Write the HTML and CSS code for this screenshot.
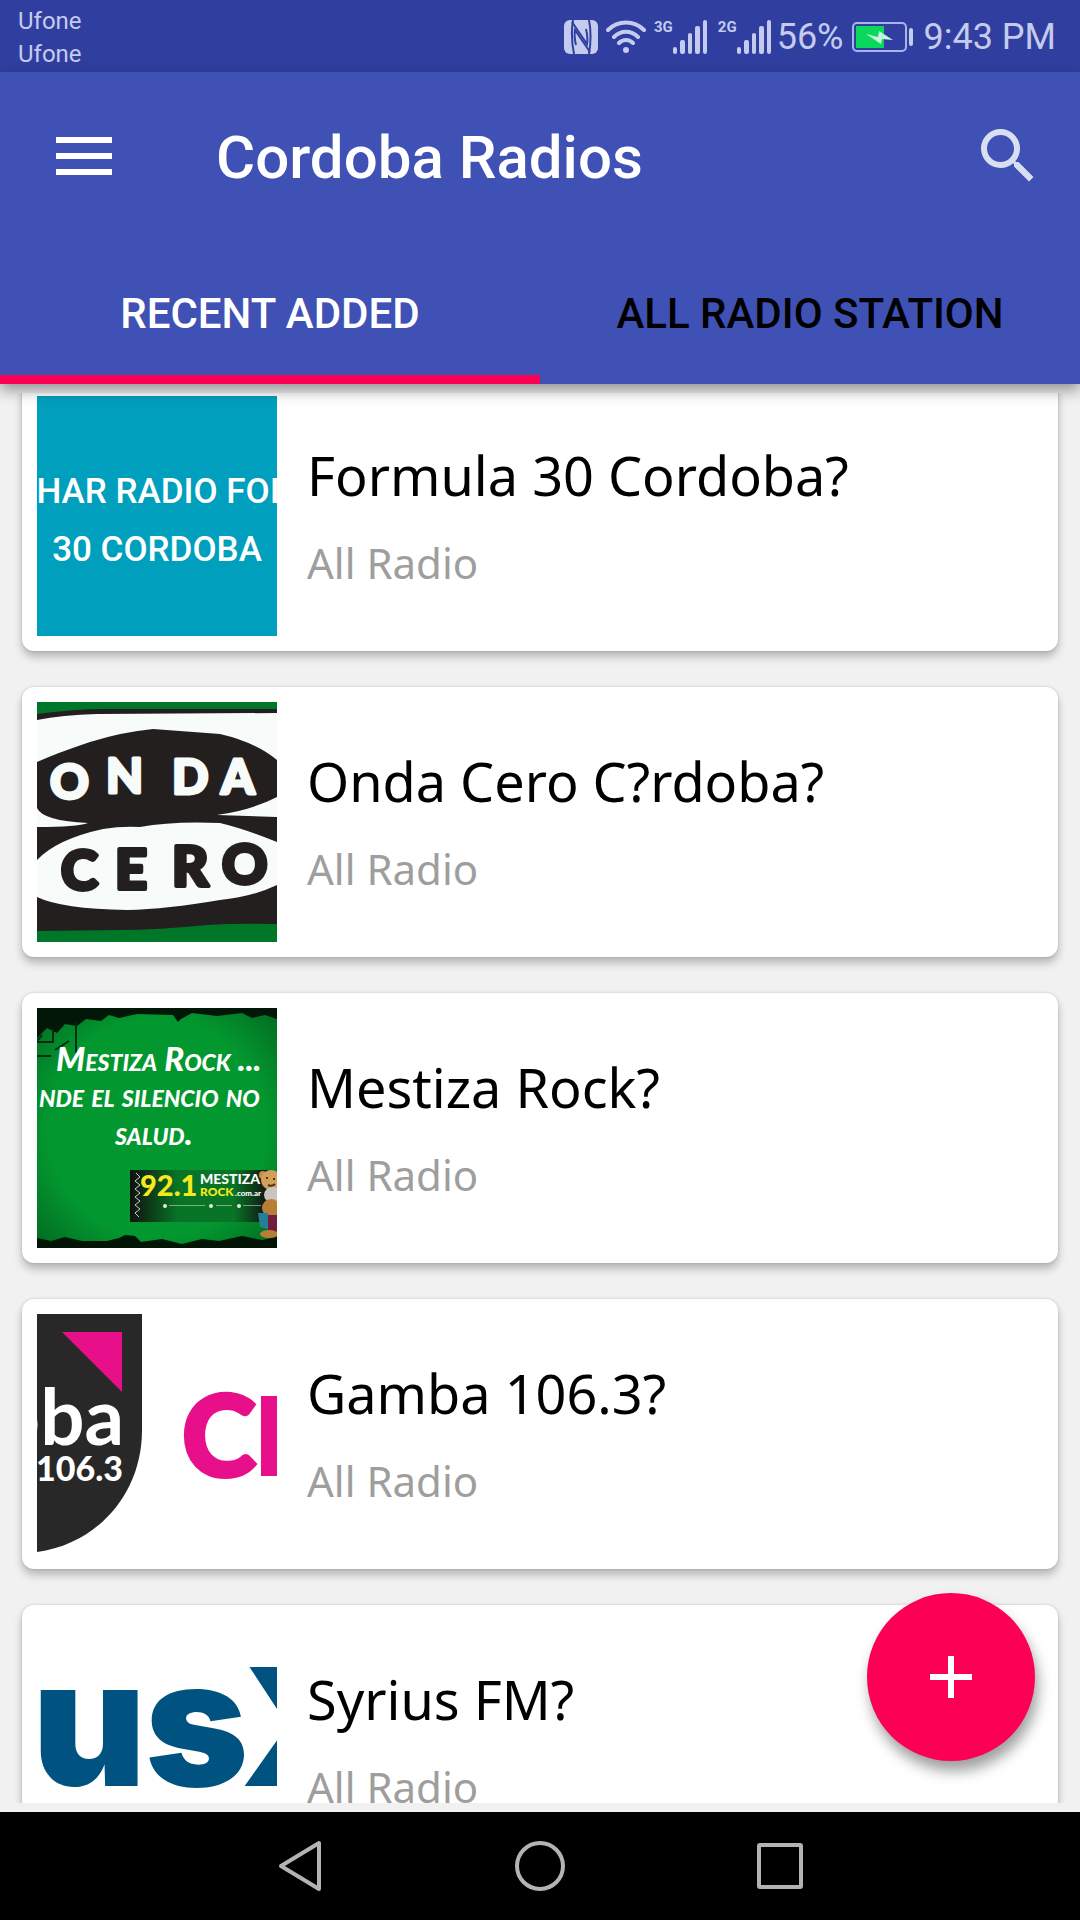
FILE: index.html
```
<!DOCTYPE html>
<html lang="en">
<head>
  <meta charset="UTF-8">
  <meta name="viewport" content="width=device-width, initial-scale=1.0">
  <title>Cordoba Radios</title>
  <link rel="stylesheet" href="styles.css">
</head>
<body>
  <div class="status-bar">
    <div class="carriers">
      <span>Ufone</span>
      <span>Ufone</span>
    </div>
    <div class="status-icons">
      <svg class="nfc" width="34" height="34" viewBox="0 0 34 34">
        <rect width="34" height="34" rx="6" fill="#c5cbee"/>
        <path d="M9 0C7 12 8 24 10 34M25 0c2 10 2 22 0 34" fill="none" stroke="#303f9f" stroke-width="2"/>
        <path d="M8 2l15 22c1-6 0-11-1-15M26 32L11 10c-1 6 0 11 1 15" fill="none" stroke="#303f9f" stroke-width="2"/>
      </svg>
      <svg class="wifi" width="40" height="34" viewBox="0 0 40 34">
        <g fill="none" stroke="#c5cbee" stroke-width="4" stroke-linecap="round">
          <path d="M2 10c10-10 26-10 36 0M8 17c7-7 17-7 24 0M13 23c4-4 10-4 14 0"/>
        </g>
        <circle cx="20" cy="30" r="3" fill="#c5cbee"/>
      </svg>
      <span class="network">3G</span>
      <svg class="signal" width="34" height="34" viewBox="0 0 34 34" fill="#c5cbee">
        <rect y="27" width="4" height="7" rx="2"/>
        <rect x="7" y="20" width="5" height="14" rx="2"/>
        <rect x="15" y="13" width="4" height="21" rx="2"/>
        <rect x="22" y="6" width="5" height="28" rx="2"/>
        <rect x="30" width="4" height="34" rx="2"/>
      </svg>
      <span class="network">2G</span>
      <svg class="signal" width="34" height="34" viewBox="0 0 34 34" fill="#c5cbee">
        <rect y="27" width="4" height="7" rx="2"/>
        <rect x="7" y="20" width="5" height="14" rx="2"/>
        <rect x="15" y="13" width="4" height="21" rx="2"/>
        <rect x="22" y="6" width="5" height="28" rx="2"/>
        <rect x="30" width="4" height="34" rx="2"/>
      </svg>
      <span class="percent">56%</span>
      <svg class="battery" width="62" height="30" viewBox="0 0 62 30">
        <rect x="1" y="1" width="53" height="28" rx="4" fill="none" stroke="#a9b2ea" stroke-width="2"/>
        <rect x="4" y="4" width="28" height="22" fill="#08d85c"/>
        <path d="M14 12l12 3 1-6 14 9-11-1-1 5z" fill="#c5f5dc"/>
        <rect x="57" y="6" width="4" height="18" rx="2" fill="#c5cbee"/>
      </svg>
      <span class="clock">9:43 PM</span>
    </div>
  </div>

  <header class="app-bar">
    <div class="toolbar">
      <button class="icon-button" aria-label="Menu">
        <svg width="56" height="38" viewBox="0 0 56 38" fill="#fff">
          <path d="M0 0h56v6H0zM0 16h56v6H0zM0 32h56v6H0z"/>
        </svg>
      </button>
      <h1>Cordoba Radios</h1>
      <button class="icon-button search" aria-label="Search">
        <svg width="72" height="72" viewBox="0 0 24 24" fill="#dadef1">
          <path d="M15.5 14h-.79l-.28-.27A6.47 6.47 0 0 0 16 9.500 6.500 6.500 0 1 0 9.500 16c1.610 0 3.090-.59 4.230-1.570l.27.28v.79l5 4.990L20.490 19l-4.990-5zm-6 0C7.010 14 5 11.990 5 9.500S7.010 5 9.500 5 14 7.010 14 9.500 11.990 14 9.500 14z"/>
        </svg>
      </button>
    </div>
    <nav class="tabs">
      <button class="tab active">RECENT ADDED</button>
      <button class="tab">ALL RADIO STATION</button>
    </nav>
  </header>

  <main>
    <div class="list">
      <article class="card">
        <svg class="thumb" viewBox="0 0 240 240">
          <rect width="240" height="240" fill="#009fbd"/>
          <g class="formula-text" text-anchor="middle">
            <text x="121" y="107">HAR RADIO FOI</text>
            <text x="120" y="165">30 CORDOBA</text>
          </g>
        </svg>
        <div class="info">
          <h2>Formula 30 Cordoba?</h2>
          <p>All Radio</p>
        </div>
      </article>

      <article class="card">
        <svg class="thumb" viewBox="0 0 240 240">
          <rect width="240" height="240" fill="#007629"/>
          <path d="M0 12Q40 7 66 7L240 7V222Q200 221 170 223Q120 228 83 228L0 229z" fill="#231f1f"/>
          <path d="M0 18Q25 13 60 12L240 11V58Q218 40 183 32L116 27Q85 30 53 40Q20 51 0 60z" fill="#f7fbf9"/>
          <path d="M240 95Q215 108 180 113L240 115zM0 106Q6 119 51 121Q40 125 0 125z" fill="#f7fbf9"/>
          <path d="M0 158Q20 137 66 127Q84 124 103 125Q135 119 183 121Q208 127 240 140V183Q215 195 183 198Q130 207 90 208Q25 207 0 195z" fill="#f7fbf9"/>
          <text class="onda" x="13 69 135 184" y="97 91 92 92">ONDA</text>
          <text class="cero" x="24 78 135 185" y="188 187 184 182">CERO</text>
        </svg>
        <div class="info">
          <h2>Onda Cero C?rdoba?</h2>
          <p>All Radio</p>
        </div>
      </article>

      <article class="card">
        <svg class="thumb" viewBox="0 0 240 240">
          <defs>
            <radialGradient id="greenGlow" r="75%">
              <stop offset="60%" stop-color="#03982f"/>
              <stop offset="100%" stop-color="#026020"/>
            </radialGradient>
            <linearGradient id="banner">
              <stop offset="0" stop-color="#111"/>
              <stop offset="35%" stop-color="#087526"/>
              <stop offset="75%" stop-color="#087526"/>
              <stop offset="100%" stop-color="#111"/>
            </linearGradient>
          </defs>
          <rect width="240" height="240" fill="url(#greenGlow)"/>
          <path d="M0 0H240V11L228 7 215 10 205 5 180 8 155 5 144 11 141 14 136 7 100 6 82 10 72 7 64 13 49 11 40 18 28 16 20 25 10 20 0 30z" fill="#021707"/>
          <path d="M39 15V45M16 21V34H0M0 48H14M18 42L32 33M5 27L0 33" fill="none" stroke="#022e0d" stroke-width="2"/>
          <path d="M0 240V230L14 233 28 229 45 233 70 233 82 230 88 227 98 228 104 234 125 231 145 236 165 231 182 233 205 228 225 232 240 229V240z" fill="#011405"/>
          <g class="mestiza">
            <text x="19" y="63">Mestiza Rock ...</text>
            <text x="2" y="99">nde el silencio no</text>
            <text x="78" y="137">salud.</text>
          </g>
          <rect x="93" y="162" width="138" height="52" fill="url(#banner)"/>
          <path d="M99 165l4 4-5 4 5 4-5 4 5 4-5 4 5 4-5 4 5 4-5 4 4 4" fill="none" stroke="#ccc" stroke-width="1"/>
          <text class="freq" x="103" y="188">92.1</text>
          <text class="freq-name" x="163" y="176">MESTIZA</text>
          <text class="freq-rock" x="163" y="188">ROCK</text>
          <text class="freq-site" x="198" y="188">.com.ar</text>
          <g fill="#dfeee2">
            <circle cx="128" cy="198" r="2"/>
            <circle cx="174" cy="198" r="2"/>
            <circle cx="202" cy="198" r="2"/>
            <path d="M132 197h36v1h-36zM179 197h16v1h-16zM206 197h18v1h-18z" opacity=".5"/>
          </g>
          <circle cx="226" cy="167" r="4" fill="#c98d44"/>
          <circle cx="234" cy="172" r="10" fill="#d3a05a"/>
          <ellipse cx="236" cy="187" rx="9" ry="8" fill="#c9c4bd"/>
          <ellipse cx="234" cy="200" rx="9" ry="9" fill="#b87e38"/>
          <path d="M221 205h10v16l-8-2z" fill="#237f9a"/>
          <path d="M231 207h9v16h-9z" fill="#741c3c"/>
          <ellipse cx="232" cy="226" rx="9" ry="4" fill="#b87e38"/>
          <path d="M229 170h2M236 171h2M231 177q4 2 7-1" fill="none" stroke="#53351a" stroke-width="2"/>
        </svg>
        <div class="info">
          <h2>Mestiza Rock?</h2>
          <p>All Radio</p>
        </div>
      </article>

      <article class="card">
        <svg class="thumb" viewBox="0 0 240 240">
          <path d="M0 0H105V116C105 180 60 230 0 238z" fill="#282828"/>
          <path d="M25 18H85V78z" fill="#e80f8b"/>
          <text class="gamba" x="87" y="131" text-anchor="end">oba</text>
          <text class="gamba-freq" x="86" y="167" text-anchor="end">106.3</text>
          <text class="gamba-city" x="145" y="162">C</text>
          <rect x="224" y="82" width="16" height="80" fill="#e80f8b"/>
        </svg>
        <div class="info">
          <h2>Gamba 106.3?</h2>
          <p>All Radio</p>
        </div>
      </article>

      <article class="card">
        <svg class="thumb" viewBox="0 0 240 240">
          <text class="syrius" x="-5 108" y="166">us</text>
          <text class="syrius-x" x="204" y="166">X</text>
        </svg>
        <div class="info">
          <h2>Syrius FM?</h2>
          <p>All Radio</p>
        </div>
      </article>
    </div>

    <button class="fab" aria-label="Add station">
      <svg width="42" height="42" viewBox="0 0 42 42" fill="#fff">
        <path d="M18 0h6v18h18v6H24v18h-6V24H0v-6h18z"/>
      </svg>
    </button>
  </main>

  <footer class="nav-bar">
    <button aria-label="Back">
      <svg width="60" height="60" viewBox="0 0 60 60">
        <path d="M49 7V53L11 30z"/>
      </svg>
    </button>
    <button aria-label="Home">
      <svg width="60" height="60" viewBox="0 0 60 60">
        <circle cx="30" cy="30" r="23"/>
      </svg>
    </button>
    <button aria-label="Recent apps">
      <svg width="60" height="60" viewBox="0 0 60 60">
        <rect x="9" y="9" width="42" height="42" rx="1"/>
      </svg>
    </button>
  </footer>
</body>
</html>
```
FILE: styles.css
```
* {
  box-sizing: border-box;
}

body {
  margin: 0;
  height: 100vh;
  display: flex;
  flex-direction: column;
  overflow: hidden;
  font-family: "Noto Sans", sans-serif;
  background-color: #f1f1f1;
  color: #000;
}

h1, h2, p {
  margin: 0;
}

button {
  padding: 0;
  border: none;
  background: none;
  cursor: pointer;
}

svg {
  display: block;
  flex: none;
}

/* status bar */
.status-bar {
  display: flex;
  justify-content: space-between;
  height: 72px;
  padding: 0 24px 0 18px;
  background-color: #303f9f;
  color: #c5cbee;
  font-family: Roboto, sans-serif;
}

.carriers {
  display: flex;
  flex-direction: column;
  padding-top: 5px;
  font-size: 24px;
  line-height: 33px;
}

.status-icons {
  display: flex;
  align-items: center;
  padding-top: 1px;
  font-size: 36px;
}

.wifi {
  margin: 0 8px;
}

.network {
  align-self: flex-start;
  padding-top: 16px;
  font-size: 15px;
  font-weight: bold;
  line-height: 20px;
}

.signal + .network {
  margin-left: 11px;
}

.percent {
  margin: 0 8px 0 6px;
}

.clock {
  margin-left: 10px;
}

/* app bar */
.app-bar {
  position: relative;
  z-index: 1;
  background-color: #3f51b5;
  box-shadow: 0 6px 14px rgba(0,0,0,0.4);
  font-family: Roboto, sans-serif;
}

.toolbar {
  display: flex;
  align-items: center;
  height: 168px;
  padding: 0 36px 0 48px;
}

.toolbar h1 {
  flex: 1;
  padding: 2px 0 0 96px;
  font-size: 60px;
  font-weight: 500;
  color: #fff;
}

.icon-button {
  display: flex;
  align-items: center;
  justify-content: center;
  width: 72px;
  height: 72px;
}

.tabs {
  display: flex;
}

.tab {
  flex: 1;
  height: 144px;
  padding-top: 2px;
  border-top: 9px solid transparent;
  border-bottom: 9px solid transparent;
  font-family: inherit;
  font-size: 42px;
  font-weight: 500;
  color: #000;
}

.tab.active {
  color: #fff;
  border-bottom-color: #fb0055;
}

/* station list */
main {
  position: relative;
  flex: 1;
  min-height: 0;
  padding: 9px 0;
}

.list {
  height: 100%;
  padding: 0 22px;
  overflow: hidden;
}

.card {
  display: flex;
  align-items: center;
  gap: 30px;
  margin-bottom: 36px;
  padding: 15px;
  background-color: #fff;
  border-radius: 12px;
  box-shadow: 0 6px 9px rgba(0,0,0,0.24), 0 0 3px rgba(0,0,0,0.16);
}

/* list is scrolled a little under the tabs */
.card:first-child {
  margin-top: -12px;
}

.thumb {
  width: 240px;
  height: 240px;
  overflow: hidden;
}

.info {
  display: flex;
  flex-direction: column;
  gap: 22px;
  padding-bottom: 3px;
}

.info h2 {
  font-size: 54px;
  font-weight: normal;
  line-height: 74px;
}

.info p {
  font-size: 42px;
  line-height: 57px;
  color: #9e9e9e;
}

/* artwork lettering */
.formula-text {
  font: 500 35px Roboto, sans-serif;
  fill: #fff;
}

.onda {
  font: 900 48px Lato, sans-serif;
  fill: #f7fbf9;
  stroke: #f7fbf9;
  stroke-width: 3px;
  stroke-linejoin: round;
}

.cero {
  font: 900 56px Lato, sans-serif;
  fill: #231f1f;
  stroke: #231f1f;
  stroke-width: 4px;
  stroke-linejoin: round;
}

.mestiza {
  font: italic small-caps 900 33px Lato, sans-serif;
  fill: #fff;
}

.freq {
  font: 900 29px Lato, sans-serif;
  fill: #f7ea1c;
}

.freq-name {
  font: 900 14px Lato, sans-serif;
  fill: #fff;
}

.freq-rock {
  font: 900 12px Lato, sans-serif;
  fill: #f7ea1c;
}

.freq-site {
  font: 900 8px Lato, sans-serif;
  fill: #fff;
}

.gamba {
  font: bold 78px Lato, sans-serif;
  fill: #fff;
}

.gamba-freq {
  font: 900 34px Lato, sans-serif;
  fill: #fff;
}

.gamba-city {
  font: 900 112px Lato, sans-serif;
  fill: #e80f8b;
  stroke: #e80f8b;
  stroke-width: 4px;
}

.syrius {
  font: 900 176px Inter, sans-serif;
  fill: #005380;
}

.syrius-x {
  font: 900 164px Inter, sans-serif;
  fill: #005380;
}

.fab {
  position: absolute;
  right: 45px;
  bottom: 51px;
  display: flex;
  align-items: center;
  justify-content: center;
  width: 168px;
  height: 168px;
  border-radius: 50%;
  background-color: #fb0055;
  box-shadow: 3px 10px 14px rgba(0,0,0,0.38);
}

/* system navigation */
.nav-bar {
  display: flex;
  justify-content: center;
  height: 108px;
  background-color: #000;
}

.nav-bar button {
  display: flex;
  align-items: center;
  justify-content: center;
  width: 240px;
}

.nav-bar svg {
  fill: none;
  stroke: #b3b3b3;
  stroke-width: 4px;
  stroke-linejoin: round;
}
```
